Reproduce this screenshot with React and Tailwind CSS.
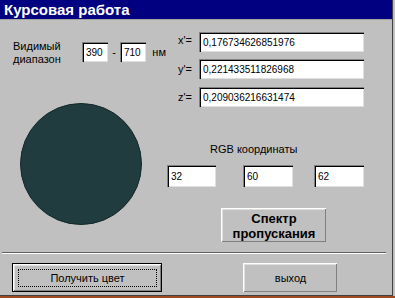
import React from "react";

// sunken win95-style text box
const Field = ({ value, className = "" }) => (
  <div
    className={`flex items-center bg-white border-t border-l border-[#808080] border-r-white border-b-white shadow-[inset_1px_1px_0_#000,inset_-1px_-1px_0_#dfdfdf] pl-[3px] text-[10px] text-black leading-none ${className}`}
  >
    {value}
  </div>
);

// raised button, default one gets black frame + focus rect
const Btn = ({ children, className = "", isDefault = false }) => (
  <div className={`${isDefault ? "border border-black" : ""} ${className}`}>
    <div className="w-full h-full flex items-center justify-center bg-[#c0c0c0] border-t border-l border-white border-r-black border-b-black shadow-[inset_-1px_-1px_0_#808080,inset_1px_1px_0_#dfdfdf]">
      {isDefault ? (
        <div className="w-[calc(100%-8px)] h-[calc(100%-8px)] flex items-center justify-center border border-dotted border-black">
          {children}
        </div>
      ) : (
        children
      )}
    </div>
  </div>
);

export default function App() {
  return (
    <div className="w-[395px] h-[298px] flex flex-col bg-[#c0c0c0] font-['Liberation_Sans',Arial,sans-serif] text-[11px] text-black overflow-hidden">
      {/* window */}
      <div className="w-[393px] h-[296px] flex flex-col border-r border-b border-[#404040]">
        {/* title bar */}
        <div className="h-[20px] bg-[#000080] flex items-center pl-[4px] border-b border-[#a0a0a0]">
          <span className="text-white font-bold text-[15px] leading-none">Курсовая работа</span>
        </div>

        {/* main area */}
        <div className="flex h-[222px]">
          {/* left column */}
          <div className="w-[166px] flex flex-col">
            <div className="flex items-center mt-[22px] h-[20px] pl-[13px]">
              <div className="w-[71px] leading-[13px] pt-[2px]">
                <div>Видимый</div>
                <div>диапазон</div>
              </div>
              <Field value="390" className="w-[27px] h-[20px]" />
              <span className="w-[12px] text-center">-</span>
              <Field value="710" className="w-[27px] h-[20px]" />
              <span className="ml-[6px]">нм</span>
            </div>
            <div className="ml-[20px] mt-[41px] w-[122px] h-[122px] rounded-full bg-[#203c3e] border border-[#14282a]" />
          </div>

          {/* right column */}
          <div className="flex-1 flex flex-col">
            <div className="flex items-center mt-[12px] h-[20px]">
              <span className="ml-[12px] w-[21px] pb-[3px]">x'=</span>
              <Field value="0,176734626851976" className="w-[165px] h-[20px]" />
            </div>
            <div className="flex items-center mt-[7px] h-[20px]">
              <span className="ml-[12px] w-[21px]">y'=</span>
              <Field value="0,221433511826968" className="w-[165px] h-[20px]" />
            </div>
            <div className="flex items-center mt-[8px] h-[20px]">
              <span className="ml-[12px] w-[21px]">z'=</span>
              <Field value="0,209036216631474" className="w-[165px] h-[20px]" />
            </div>

            <div className="mt-[35px] ml-[44px] h-[14px] leading-[14px]">RGB координаты</div>

            <div className="flex mt-[9px] ml-[1px]">
              <Field value="32" className="w-[49px] h-[22px]" />
              <Field value="60" className="w-[50px] h-[22px] ml-[27px]" />
              <Field value="62" className="w-[50px] h-[22px] ml-[21px]" />
            </div>

            <div className="mt-[21px] ml-[55px]">
              <Btn className="w-[105px] h-[34px]">
                <div className="text-center font-bold text-[13px] leading-[15px]">
                  Спектр
                  <br />
                  пропускания
                </div>
              </Btn>
            </div>
          </div>
        </div>

        {/* separator */}
        <div className="mt-[10px] ml-[2px] w-[384px] border-t border-[#606060] border-b border-b-white" />

        {/* bottom buttons */}
        <div className="flex mt-[9px]">
          <div className="ml-[12px]">
            <Btn isDefault className="w-[150px] h-[29px]">
              Получить цвет
            </Btn>
          </div>
          <div className="ml-[81px]">
            <Btn className="w-[94px] h-[29px]">выход</Btn>
          </div>
        </div>
      </div>
      <div className="h-[2px] w-full bg-[#a04a22]" />
    </div>
  );
}
